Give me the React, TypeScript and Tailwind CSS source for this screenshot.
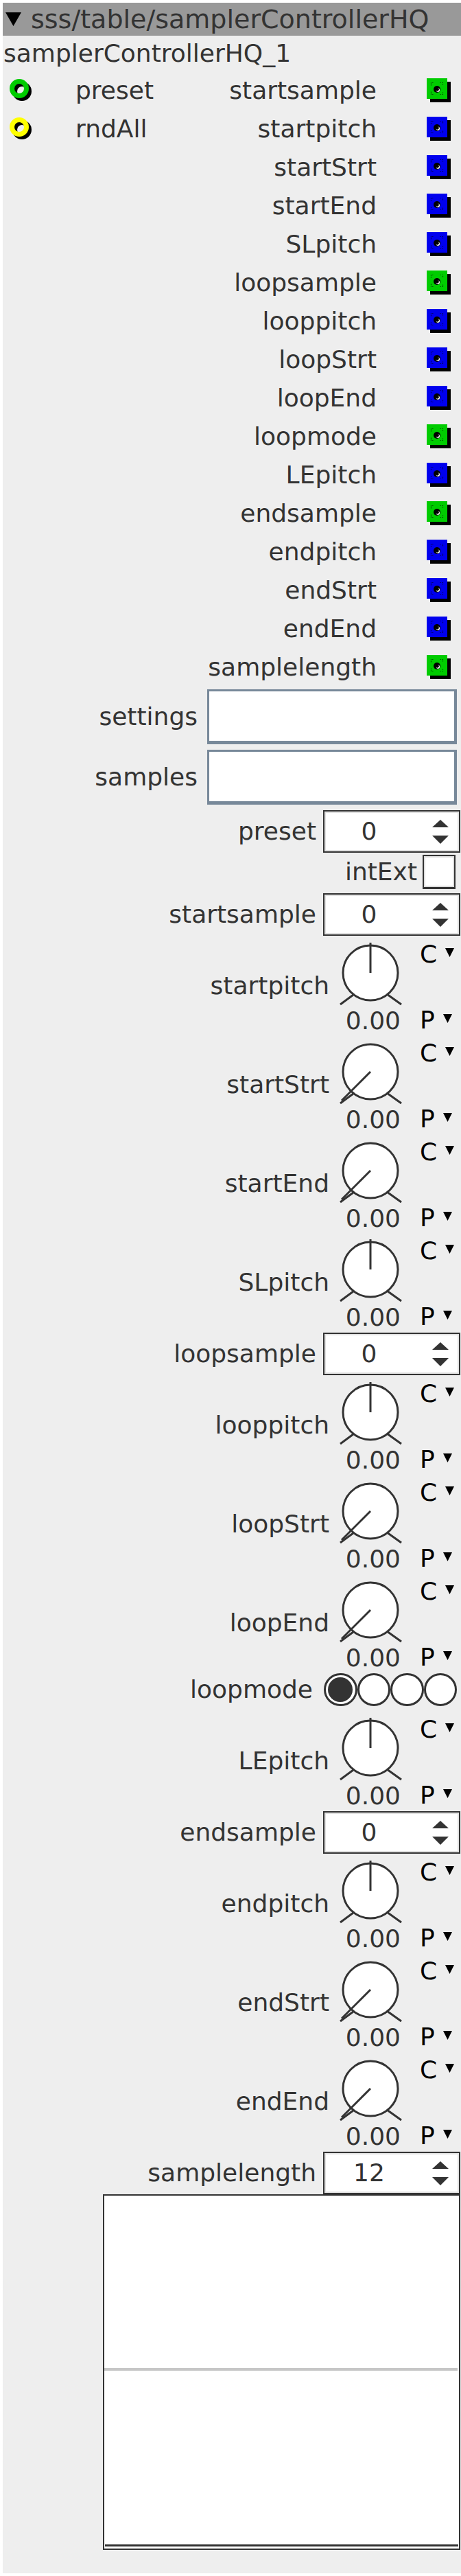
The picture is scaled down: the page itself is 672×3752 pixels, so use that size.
const FONT = "font-['DejaVu_Sans',sans-serif]";

type Kind = "g" | "b";

const outlets: [string, Kind][] = [
  ["startsample", "g"],
  ["startpitch", "b"],
  ["startStrt", "b"],
  ["startEnd", "b"],
  ["SLpitch", "b"],
  ["loopsample", "g"],
  ["looppitch", "b"],
  ["loopStrt", "b"],
  ["loopEnd", "b"],
  ["loopmode", "g"],
  ["LEpitch", "b"],
  ["endsample", "g"],
  ["endpitch", "b"],
  ["endStrt", "b"],
  ["endEnd", "b"],
  ["samplelength", "g"],
];

const inlets = [
  { label: "preset", color: "#00cc00" },
  { label: "rndAll", color: "#ffff00" },
];

function Ring({ color }: { color: string }) {
  return (
    <svg width="34" height="34" viewBox="0 0 34 34" className="shrink-0">
      <circle cx="18" cy="18" r="10.5" fill="none" stroke="#000" strokeWidth="7" />
      <circle cx="14" cy="14" r="10.5" fill="none" stroke={color} strokeWidth="7" />
    </svg>
  );
}

function Outlet({ kind }: { kind: Kind }) {
  const fill = kind === "g" ? "#00cc00" : "#0000ee";
  return (
    <svg width="36" height="36" viewBox="0 0 36 36" className="shrink-0">
      <rect x="5" y="5" width="30" height="30" fill="#000" />
      <rect x="0" y="0" width="30" height="30" fill={fill} />
      <g stroke="#000" strokeOpacity="0.55" strokeWidth="1.2" strokeDasharray="1.4 1.4" fill="none">
        <path d="M6.5 10.5V6.5H10.5" />
        <path d="M19.5 6.5H23.5V10.5" />
        <path d="M6.5 19.5V23.5H10.5" />
        <path d="M19.5 23.5H23.5V19.5" />
      </g>
      <circle cx="15" cy="16" r="5" fill="#000" />
      <circle cx="16.4" cy="17.2" r="2.6" fill="#fff" />
      <circle cx="15.4" cy="16.3" r="2.4" fill="#000" />
    </svg>
  );
}

function Caret() {
  return (
    <svg width="13" height="13" viewBox="0 0 13 13" className="shrink-0 mt-[4px]">
      <path d="M0 0H13L6.5 13Z" fill="#000" />
    </svg>
  );
}

function KnobDial({ mid }: { mid: boolean }) {
  return (
    <svg width="96" height="99" viewBox="0 0 96 99" className="shrink-0">
      <g stroke="#333" strokeWidth="3" fill="none">
        <circle cx="48" cy="47" r="40" fill="#fff" />
        <line x1="23" y1="79" x2="4" y2="93" />
        <line x1="72" y1="78" x2="93" y2="93" />
        {mid ? <line x1="48" y1="47" x2="48" y2="3" /> : <line x1="48" y1="47" x2="6" y2="89" />}
      </g>
    </svg>
  );
}

function Knob({ label, mid, follow }: { label: string; mid: boolean; follow?: boolean }) {
  return (
    <div className={`flex flex-col pb-[4px] ${follow ? "mt-[5px]" : ""}`}>
      <div className="flex h-[99px]">
        <div className="flex-1 text-right pt-[48px] pr-[12px] leading-[36px]">{label}</div>
        <KnobDial mid={mid} />
        <div className="w-[84px] pl-[24px] pt-[7px] flex items-start gap-[12px] text-black leading-[36px]">
          <span className="leading-[26px]">C</span>
          <Caret />
        </div>
      </div>
      <div className="flex h-[36px] justify-end leading-[36px]">
        <div className="w-[96px] text-right pr-[4px]">0.00</div>
        <div className="w-[84px] pl-[24px] flex items-start gap-[12px] text-black pt-[4px]">
          <span className="leading-[26px]">P</span>
          <Caret />
        </div>
      </div>
    </div>
  );
}

function SpinArrows() {
  return (
    <svg width="24" height="35" viewBox="0 0 24 35" className="shrink-0">
      <path d="M0 11L12 0L24 11Z" fill="#333" />
      <path d="M0 23H24L12 35Z" fill="#333" />
    </svg>
  );
}

function Spin({ label, value, className }: { label: string; value: string; className?: string }) {
  return (
    <div className={`flex justify-end items-center ${className ?? ""}`}>
      <div className="pr-[10px] leading-[36px]">{label}</div>
      <div className="w-[200px] h-[62px] mr-[1px] border-2 border-[#333] bg-white shadow-[inset_0_0_0_2px_#e2e2e2] flex items-center">
        <div className="w-[126px] text-center pl-[4px] leading-[36px]">{value}</div>
        <div className="flex-1 flex justify-end pr-[15px]">
          <SpinArrows />
        </div>
      </div>
    </div>
  );
}

function TextField({ label, className }: { label: string; className?: string }) {
  return (
    <div className={`flex justify-end items-center ${className ?? ""}`}>
      <div className="pr-[14px] leading-[36px]">{label}</div>
      <div className="w-[364px] h-[80px] mr-[6px] bg-white border-[3px] border-r-[4px] border-b-[5px] border-[#778899]" />
    </div>
  );
}

function Radios() {
  return (
    <div className="flex justify-end items-start h-[62px]">
      <div className="pr-[16px] leading-[48px]">loopmode</div>
      <div className="flex mr-[6px]">
        {[0, 1, 2, 3].map((i) => (
          <div
            key={i}
            className="w-[48.5px] h-[48px] rounded-full border-[3px] border-[#333] bg-white flex items-center justify-center"
          >
            {i === 0 && <div className="w-[36px] h-[36px] rounded-full bg-[#333]" />}
          </div>
        ))}
      </div>
    </div>
  );
}

export default function App() {
  return (
    <div className={`bg-white pt-[4px] pb-[4px] pl-[4px] ${FONT} text-[36px] text-[#333]`}>
      <div className="bg-[#eeeeee] pb-[34px]">
        <div className="h-[48px] bg-[#999999] flex items-center">
          <svg width="23" height="20" viewBox="0 0 23 20" className="ml-[4px] shrink-0">
            <path d="M0 0H23L11.5 20Z" fill="#000" />
          </svg>
          <span className="ml-[14px] text-[38px] leading-none text-[#333]">sss/table/samplerControllerHQ</span>
        </div>

        <div className="h-[52px] flex items-center pl-[1px] leading-none">samplerControllerHQ_1</div>

        {outlets.map(([name, kind], i) => (
          <div key={name} className="h-[56px] flex items-center">
            <div className="w-[106px] pl-[10px] flex items-center">
              {inlets[i] && <Ring color={inlets[i].color} />}
            </div>
            <div className="leading-[36px]">{inlets[i]?.label}</div>
            <div className="flex-1" />
            <div className="leading-[36px]">{name}</div>
            <div className="w-[73px]" />
            <Outlet kind={kind} />
            <div className="w-[14px]" />
          </div>
        ))}

        <TextField label="settings" className="mt-[4px]" />
        <TextField label="samples" className="mt-[8px]" />
        <Spin label="preset" value="0" className="mt-[8px]" />
        <div className="flex justify-end items-center mt-[3px]">
          <div className="pr-[8px] leading-[36px]">intExt</div>
          <div className="w-[48px] h-[50px] mr-[8px] bg-white border-2 border-b-[3px] border-[#333] shadow-[inset_0_0_0_2px_#dddddd]" />
        </div>
        <Spin label="startsample" value="0" className="mt-[6px] mb-[7px]" />

        <Knob label="startpitch" mid />
        <Knob label="startStrt" mid={false} follow />
        <Knob label="startEnd" mid={false} follow />
        <Knob label="SLpitch" mid follow />
        <Spin label="loopsample" value="0" className="mb-[7px]" />
        <Knob label="looppitch" mid />
        <Knob label="loopStrt" mid={false} follow />
        <Knob label="loopEnd" mid={false} follow />
        <Radios />
        <Knob label="LEpitch" mid />
        <Spin label="endsample" value="0" className="mb-[7px]" />
        <Knob label="endpitch" mid />
        <Knob label="endStrt" mid={false} follow />
        <Knob label="endEnd" mid={false} follow />
        <Spin label="samplelength" value="12" />

        <div className="ml-[146px] mr-[1px] h-[518px] border-2 border-[#333] bg-white flex flex-col">
          <div className="h-[251px]" />
          <div className="h-[4px] bg-[#c6c6c6] mr-[2px]" />
          <div className="flex-1" />
          <div className="h-[3px] bg-[#333] mx-[1px]" />
          <div className="h-[3px]" />
        </div>
      </div>
    </div>
  );
}
